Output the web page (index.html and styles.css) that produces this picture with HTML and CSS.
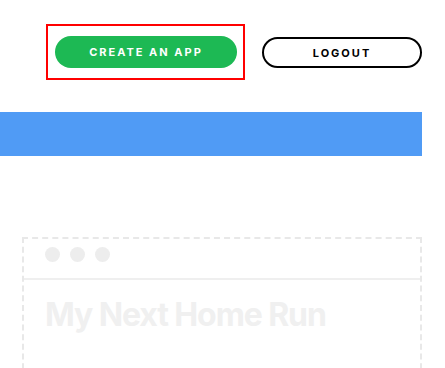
FILE: index.html
```html
<!DOCTYPE html>
<html lang="en">
<head>
  <meta charset="UTF-8">
  <title>Dashboard</title>
  <link rel="stylesheet" href="styles.css">
</head>
<body>
  <div class="page">
    <div class="header">
      <div class="highlight">
        <button class="create-btn">Create an app</button>
      </div>
      <button class="logout-btn">Logout</button>
    </div>
    <div class="banner"></div>
    <div class="app-card">
      <div class="card-top">
        <span class="dot"></span>
        <span class="dot"></span>
        <span class="dot"></span>
      </div>
      <h2 class="card-title">My Next Home Run</h2>
    </div>
  </div>
</body>
</html>
```

FILE: styles.css
```css
body {
  margin: 0;
  font-family: Inter, "Liberation Sans", sans-serif;
  background: #ffffff;
}

.page {
  width: 422px;
}

.header {
  display: flex;
  justify-content: flex-end;
  align-items: center;
  gap: 17px;
  padding-top: 24px;
  height: 56px;
}

.highlight {
  border: 2px solid #ff0000;
  padding: 10px 6px 10px 7px;
  width: 182px;
  height: 32px;
  box-sizing: content-box;
}

.create-btn,
.logout-btn {
  font-family: Inter, "Liberation Sans", sans-serif;
  font-weight: 700;
  font-size: 11px;
  letter-spacing: 2px;
  text-transform: uppercase;
  border-radius: 999px;
  cursor: pointer;
}

.create-btn {
  width: 182px;
  height: 32px;
  background-color: #1db954;
  color: #ffffff;
  border: none;
}

.logout-btn {
  width: 160px;
  height: 31px;
  background-color: #ffffff;
  color: #000000;
  border: 2px solid #000000;
  margin-top: 1px;
}

.banner {
  margin-top: 32px;
  height: 44px;
  background-color: #509bf5;
}

.app-card {
  margin: 81px 0 0 22px;
  border: 2px dashed #e8e8e8;
  border-bottom: none;
  height: 140px;
}

.card-top {
  display: flex;
  gap: 10px;
  padding: 8px 0 0 21px;
  height: 31px;
  border-bottom: 2px solid #efefef;
}

.dot {
  width: 15px;
  height: 15px;
  border-radius: 50%;
  background-color: #ededed;
}

.card-title {
  margin: 15px 0 0 21px;
  font-size: 32px;
  font-weight: 700;
  letter-spacing: -1.1px;
  color: #f0f0f0;
}
```
